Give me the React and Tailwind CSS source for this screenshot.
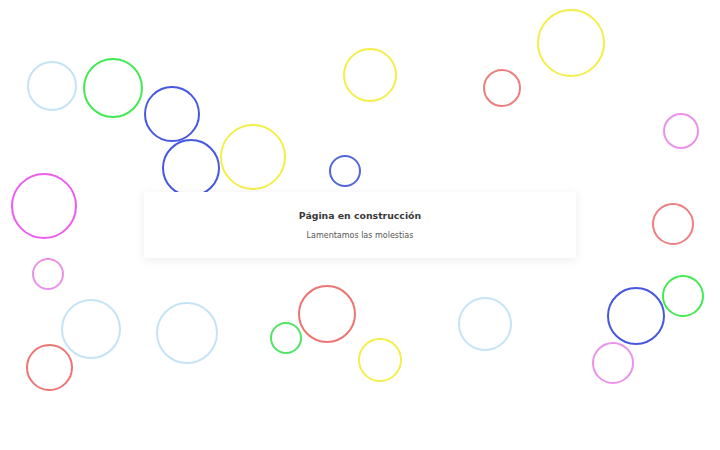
import React from "react";

const bubbles = [
  { c: "border-[#c4e4f6] left-[27px] top-[61px] w-[50px] h-[50px]" },
  { c: "border-[#42ea52] left-[83px] top-[58px] w-[60px] h-[60px]" },
  { c: "border-[#4658e2] left-[144px] top-[86px] w-[56px] h-[56px]" },
  { c: "border-[#4658e2] left-[162px] top-[139px] w-[58px] h-[58px]" },
  { c: "border-[#f4ee48] left-[220px] top-[124px] w-[66px] h-[66px]" },
  { c: "border-[#5366da] border-2 left-[329px] top-[155px] w-[32px] h-[32px]" },
  { c: "border-[#f4ee48] left-[343px] top-[48px] w-[54px] h-[54px]" },
  { c: "border-[#ee7e7e] border-2 left-[483px] top-[69px] w-[38px] h-[38px]" },
  { c: "border-[#f4ee48] left-[537px] top-[9px] w-[68px] h-[68px]" },
  { c: "border-[#ea92ea] border-2 left-[663px] top-[113px] w-[36px] h-[36px]" },
  { c: "border-[#ef5cef] left-[11px] top-[173px] w-[66px] h-[66px]" },
  { c: "border-[#ee7e7e] border-2 left-[652px] top-[203px] w-[42px] h-[42px]" },
  { c: "border-[#ea92ea] border-2 left-[32px] top-[258px] w-[32px] h-[32px]" },
  { c: "border-[#c4e4f6] left-[61px] top-[299px] w-[60px] h-[60px]" },
  { c: "border-[#c4e4f6] left-[156px] top-[302px] w-[62px] h-[62px]" },
  { c: "border-[#ee7474] left-[26px] top-[344px] w-[47px] h-[47px]" },
  { c: "border-[#50e465] border-2 left-[270px] top-[322px] w-[32px] h-[32px]" },
  { c: "border-[#ee7474] left-[298px] top-[285px] w-[58px] h-[58px]" },
  { c: "border-[#f4ee48] left-[358px] top-[338px] w-[44px] h-[44px]" },
  { c: "border-[#c4e4f6] left-[458px] top-[297px] w-[54px] h-[54px]" },
  { c: "border-[#4658e2] left-[607px] top-[287px] w-[58px] h-[58px]" },
  { c: "border-[#42ea52] border-2 left-[662px] top-[275px] w-[42px] h-[42px]" },
  { c: "border-[#ea92ea] border-2 left-[592px] top-[342px] w-[42px] h-[42px]" },
];

export default function App() {
  return (
    <div className="relative w-full h-[450px] overflow-hidden bg-white font-['DejaVu_Sans',sans-serif] flex items-center justify-center">
      {bubbles.map((b, i) => (
        <div
          key={i}
          className={`absolute rounded-full border-[2.5px] blur-[0.4px] shadow-[inset_-3px_-3px_4px_rgba(255,255,255,0.95),inset_0_0_2px_rgba(255,255,255,0.7)] ${b.c}`}
        />
      ))}
      <div className="relative w-[432px] h-[66px] bg-white shadow-[0_2px_10px_rgba(0,0,0,0.08)] flex flex-col items-center justify-center gap-[12px] pt-[1px]">
        <div className="text-[9.33px] font-bold text-[#383838] leading-none">Página en construcción</div>
        <div className="text-[8px] text-[#555555] leading-none">Lamentamos las molestias</div>
      </div>
    </div>
  );
}
